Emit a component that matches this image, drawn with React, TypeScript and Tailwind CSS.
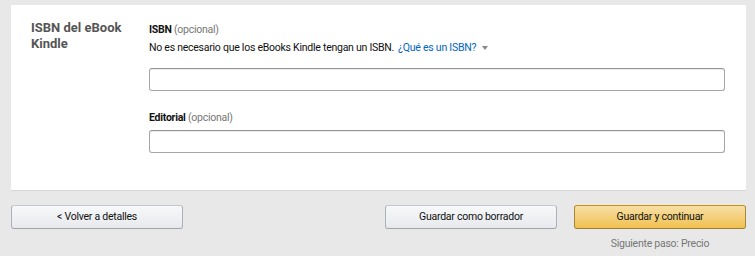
import React from "react";

export default function App() {
  const font = { fontFamily: 'Roboto, "Liberation Sans", Arial, sans-serif' };
  return (
    <div
      className="w-[755px] h-[256px] bg-[#e8e8e8] pt-[5px] pl-[11px] pr-[9px] text-[#111]"
      style={font}
    >
      <div className="bg-white border-b border-[#d5d5d5] h-[186px] flex pl-[20px] pr-[21px]">
        <div className="w-[118px] pt-[15px] text-[13px] leading-[16px] font-bold text-[#555]">
          ISBN del eBook
          <br />
          Kindle
        </div>
        <div className="flex-1 flex flex-col pt-[18px] text-[10.5px] tracking-[-0.25px]">
          <div className="leading-[14px]">
            <span className="font-bold">ISBN</span>{" "}
            <span className="text-[#767676]">(opcional)</span>
          </div>
          <div className="leading-[14px] mt-[4px] flex items-center">
            <span>No es necesario que los eBooks Kindle tengan un ISBN.</span>
            <span className="text-[#0066c0] ml-[4px]">¿Qué es un ISBN?</span>
            <span className="ml-[6px] inline-block w-0 h-0 border-l-[3px] border-r-[3px] border-t-[4px] border-l-transparent border-r-transparent border-t-[#888]" />
          </div>
          <div className="mt-[13px] h-[23px] border border-[#a6a6a6] border-t-[#949494] rounded-[3px] shadow-[inset_0_1px_0_rgba(0,0,0,0.07)]" />
          <div className="leading-[14px] mt-[20px]">
            <span className="font-bold">Editorial</span>{" "}
            <span className="text-[#767676]">(opcional)</span>
          </div>
          <div className="mt-[5px] h-[23px] border border-[#a6a6a6] border-t-[#949494] rounded-[3px] shadow-[inset_0_1px_0_rgba(0,0,0,0.07)]" />
        </div>
      </div>
      <div className="flex mt-[14px] text-[10.5px] tracking-[-0.25px]">
        <button className="w-[172px] h-[24px] rounded-[3px] border border-[#adb1b8] border-t-[#c5c8cc] border-b-[#a2a6ac] bg-gradient-to-b from-[#f7f8fa] to-[#e7e9ec] text-[#111]">
          &lt; Volver a detalles
        </button>
        <div className="flex-1" />
        <button className="w-[172px] h-[24px] rounded-[3px] border border-[#adb1b8] border-t-[#c5c8cc] border-b-[#a2a6ac] bg-gradient-to-b from-[#f7f8fa] to-[#e7e9ec] text-[#111]">
          Guardar como borrador
        </button>
        <div className="w-[17px]" />
        <div className="w-[172px] flex flex-col items-center">
          <button className="w-[172px] h-[24px] rounded-[3px] border border-[#a88734] border-t-[#c89411] border-b-[#9c7e31] bg-gradient-to-b from-[#f7dfa5] to-[#f0c14b] text-[#111]">
            Guardar y continuar
          </button>
          <div className="mt-[8px] leading-[14px] text-[#767676]">
            Siguiente paso: Precio
          </div>
        </div>
      </div>
    </div>
  );
}
